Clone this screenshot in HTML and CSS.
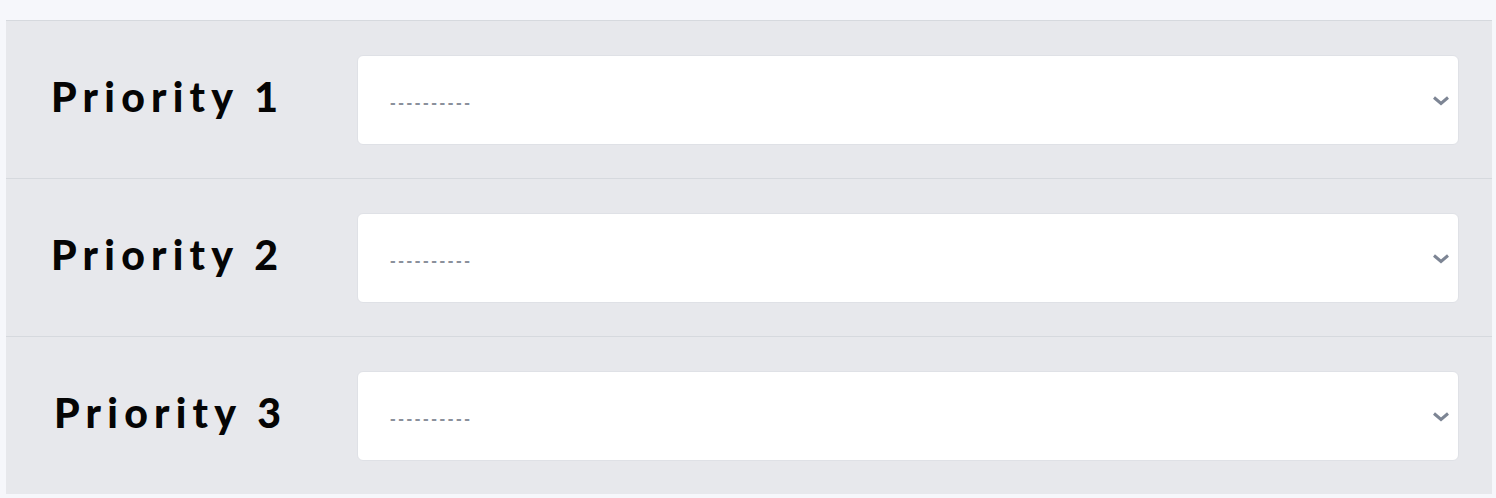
FILE: index.html
```html
<!DOCTYPE html>
<html lang="en">
<head>
<meta charset="utf-8">
<title>Priorities</title>
<link rel="stylesheet" href="styles.css">
</head>
<body>
<div class="panel">
  <div class="row">
    <label class="label">Priority 1</label>
    <div class="select">
      <span class="placeholder">----------</span>
      <svg class="chevron" width="18" height="11" viewBox="0 0 18 11"><path d="M2 2.5 L9 8.5 L16 2.5" fill="none" stroke="#7d8594" stroke-width="3"/></svg>
    </div>
  </div>
  <div class="row">
    <label class="label">Priority 2</label>
    <div class="select">
      <span class="placeholder">----------</span>
      <svg class="chevron" width="18" height="11" viewBox="0 0 18 11"><path d="M2 2.5 L9 8.5 L16 2.5" fill="none" stroke="#7d8594" stroke-width="3"/></svg>
    </div>
  </div>
  <div class="row">
    <label class="label label-shift">Priority 3</label>
    <div class="select">
      <span class="placeholder">----------</span>
      <svg class="chevron" width="18" height="11" viewBox="0 0 18 11"><path d="M2 2.5 L9 8.5 L16 2.5" fill="none" stroke="#7d8594" stroke-width="3"/></svg>
    </div>
  </div>
</div>
</body>
</html>
```
FILE: styles.css
```css
html, body {
  margin: 0;
  padding: 0;
  background: #f6f7fb;
}
body {
  padding-top: 20px;
}
.panel {
  margin: 0 4px 0 6px;
  background: #e7e8ec;
  border-top: 1px solid #d6d9de;
  height: 473px;
  display: flex;
  flex-direction: column;
}
.row {
  display: flex;
  align-items: center;
  padding: 34px 33px 33px 45px;
  border-bottom: 1px solid #d6d9de;
}
.row:last-child {
  border-bottom: none;
}
.label {
  width: 306px;
  flex: none;
  font-family: "Lato", "Liberation Sans", sans-serif;
  font-weight: 900;
  font-size: 41px;
  line-height: 1;
  letter-spacing: 6.2px;
  color: #050505;
  padding-bottom: 8px;
}
.label-shift {
  padding-left: 3px;
  width: 303px;
}
.select {
  flex: 1;
  height: 88px;
  background: #ffffff;
  border: 1px solid #dfe1e6;
  border-radius: 6px;
  display: flex;
  align-items: center;
  justify-content: space-between;
  padding: 0 8px 0 32px;
}
.placeholder {
  font-family: "Liberation Sans", sans-serif;
  font-weight: 700;
  font-size: 17px;
  letter-spacing: 2.6px;
  color: #8a909b;
  padding-top: 6px;
}
.chevron {
  display: block;
}
```
